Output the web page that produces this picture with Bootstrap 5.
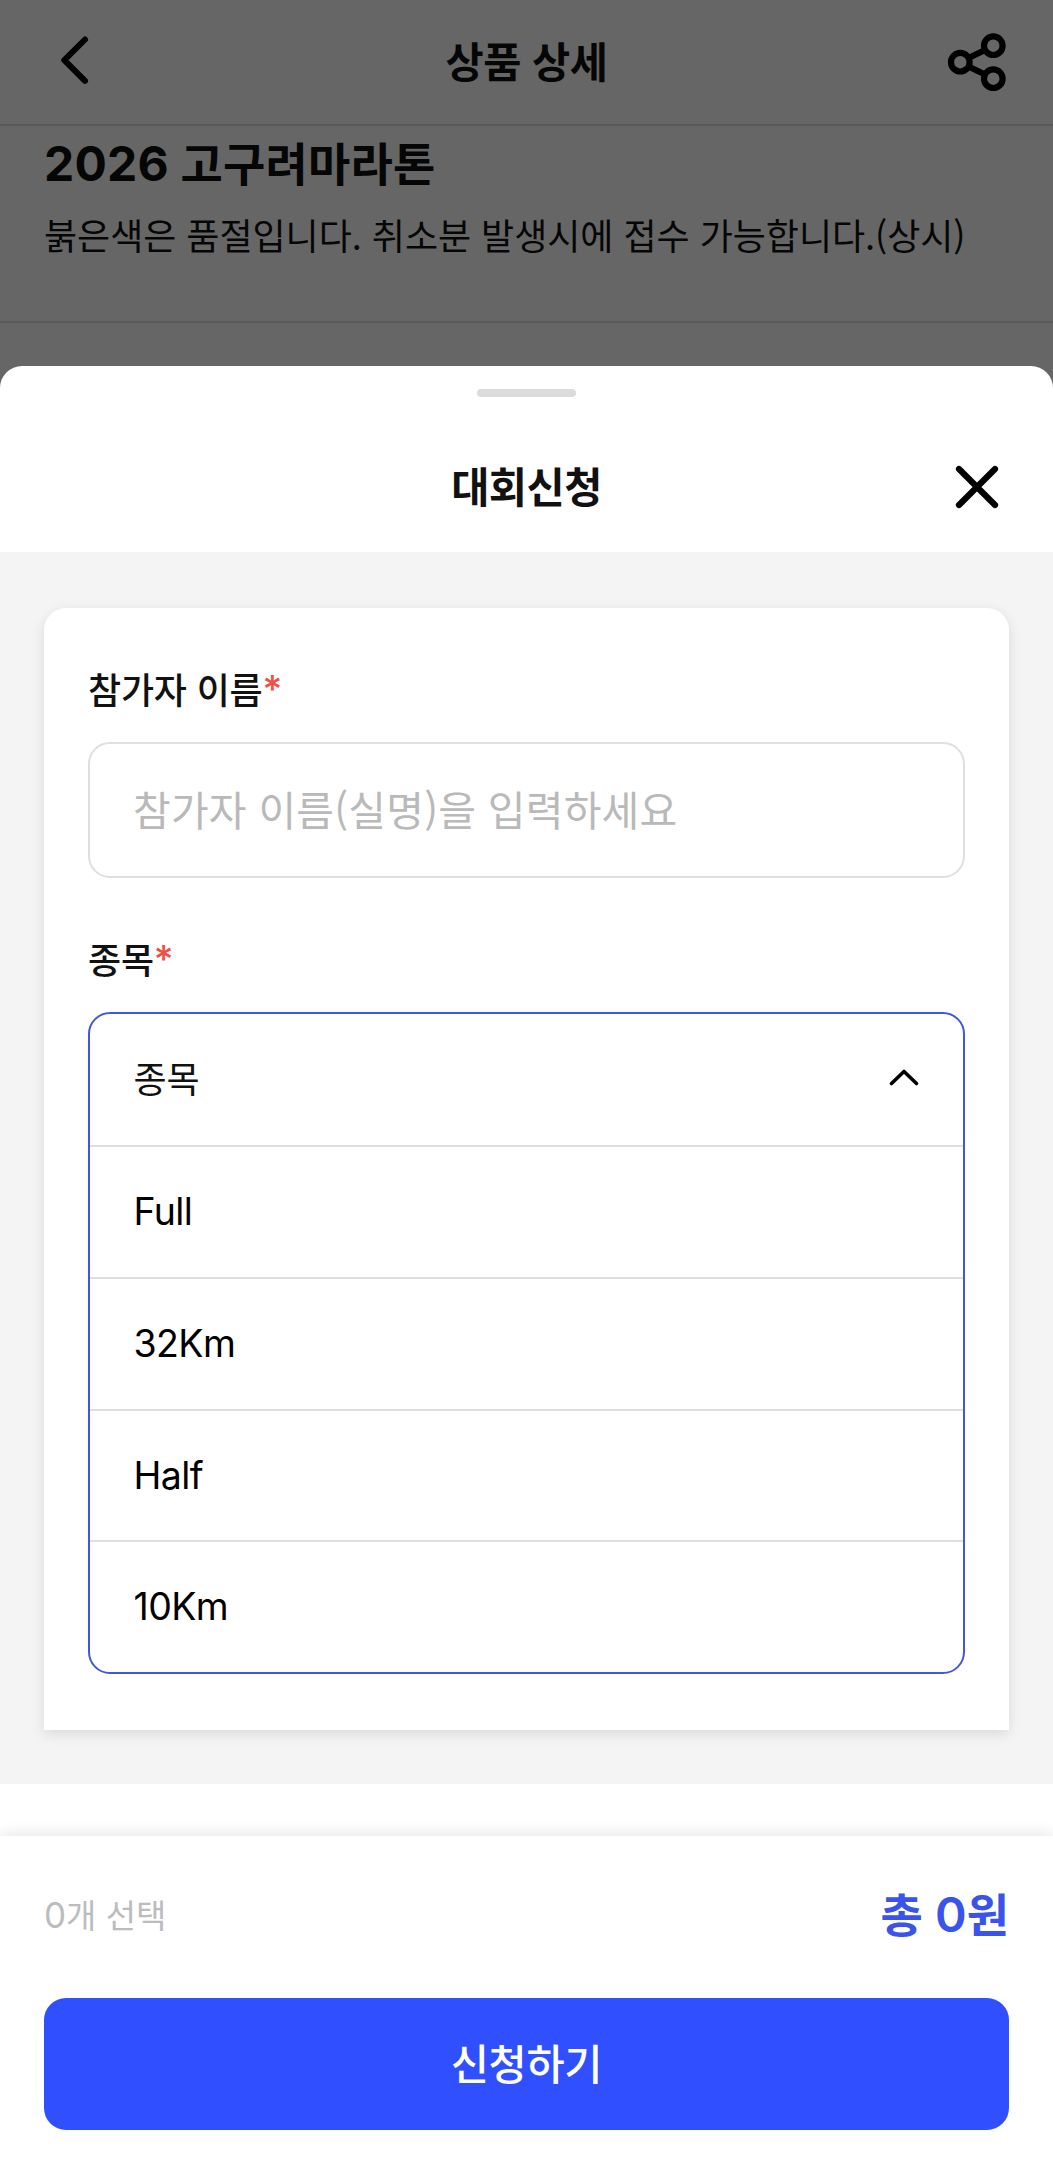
<!DOCTYPE html>
<html lang="ko">
<head>
<meta charset="utf-8">
<meta name="viewport" content="width=device-width, initial-scale=1">
<title>대회신청</title>
<link href="https://cdn.jsdelivr.net/npm/bootstrap@5.3.0/dist/css/bootstrap.min.css" rel="stylesheet">
<style>
  body { font-family: Inter, "Noto Sans CJK KR", sans-serif; color: #111; background: #fff; width: 1053px; height: 2160px; overflow: hidden; line-height: 1; }
  svg { display: block; fill: none; stroke: #000; stroke-linecap: round; stroke-linejoin: round; overflow: visible; }
  .ko { font-family: "Noto Sans CJK KR", sans-serif; }
  .page-area { height: 366px; }
  .top-bar { height: 126px; border-bottom: 2px solid #e1e1e1; padding: 0 44px; }
  .side-slot { width: 60px; }
  .bar-title { font-size: 41.5px; font-weight: 700; letter-spacing: -.5px; padding-bottom: 3px; }
  .product-info { height: 197px; border-bottom: 2px solid #e1e1e1; padding: 7px 44px 0; }
  .product-name { font-size: 48px; font-weight: 700; line-height: 56px; letter-spacing: .2px; }
  .product-name .ko { font-size: 46px; }
  .product-desc { font-size: 36px; line-height: 54px; letter-spacing: -.04px; margin-top: 14.500px; }
  .dim { background: rgba(0,0,0,.6); height: 410px; z-index: 1; }
  .sheet { z-index: 2; height: 1794px; border-radius: 22px 22px 0 0; background: #fff; }
  .grip { width: 99px; height: 8px; border-radius: 4px; background: #dcdcdc; margin-top: 23px; }
  .sheet-head { height: 155px; padding: 25px 44px 0; }
  .sheet-body { background: #f4f4f4; height: 1232px; padding: 56px 44px 0; }
  .form-card { height: 1122px; background: #fff; border-radius: 22px 22px 0 0; box-shadow: 0 4px 14px rgba(0,0,0,.11); padding: 53px 44px 0; }
  .field-label { font-size: 36px; font-weight: 500; line-height: 54px; height: 54px; letter-spacing: -.2px; margin-bottom: 27px; }
  .event-label { margin-top: 53px; }
  .req { color: #f04f44; font-family: Inter, sans-serif; font-size: 38px; line-height: 1; vertical-align: 1px; }
  .name-input { height: 136px; border: 2px solid #dfdfdf; border-radius: 22px; padding: 0 43px 5px; font-size: 41px; letter-spacing: .2px; }
  .name-input::placeholder { color: #b9b9b9; opacity: 1; }
  .event-list { height: 662px; border: 2px solid #4258d6; border-radius: 22px; margin-bottom: 0; }
  .event-list .list-group-item { flex: 1 1 0; padding: 0 43.500px; border: 0; border-bottom: 2px solid #dfdfdf; font-size: 37.5px; color: #000; background: transparent; letter-spacing: -.6px; }
  .event-list .list-group-item:first-child { flex: 0 0 133px; }
  .event-list .list-group-item:last-child { border-bottom: 0; }
  .event-list .ko { font-size: 36px; color: #111; letter-spacing: -.2px; padding-bottom: 5px; }
  .event-list svg { margin-bottom: 3px; }
  .pay-bar { height: 324px; margin-top: 52px; background: #fff; padding: 0 44px; box-shadow: 0 -2px 14px rgba(0,0,0,.1); }
  .sum-row { height: 162px; }
  .count-text { color: #bcbcbc; font-size: 35px; padding-bottom: 3px; }
  .count-text .ko { font-size: 33px; letter-spacing: 0; }
  .total-text { color: #3a53ea; font-size: 48px; font-weight: 600; padding-bottom: 6px; }
  .total-text .ko { font-size: 46px; font-weight: 700; }
  .apply-btn { height: 132px; border: 0; border-radius: 22px; background: #3050ff; font-size: 41.5px; font-weight: 500; letter-spacing: -.3px; padding: 0 0 4px; }
</style>
<script src="https://cdn.jsdelivr.net/npm/bootstrap@5.3.0/dist/js/bootstrap.bundle.min.js"></script>
</head>
<body class="position-relative">
  <div class="page-area">
    <header class="top-bar d-flex align-items-center justify-content-between">
      <div class="side-slot"><svg width="60" height="60" viewBox="44 32 60 60" stroke-width="6"><path d="M85 39.500L64.300 60.200l20.700 20.700"/></svg></div>
      <div class="bar-title ko">상품 상세</div>
      <div class="side-slot d-flex justify-content-end"><svg width="60" height="60" viewBox="949 32 60 60" stroke-width="6.200"><circle cx="960.300" cy="62.200" r="9.300"/><circle cx="993.300" cy="45.700" r="9.300"/><circle cx="993.300" cy="78.700" r="9.300"/><path d="M969 57.700l15.500-7.500M969 66.700l15.500 7.500"/></svg></div>
    </header>
    <section class="product-info">
      <h1 class="product-name mb-0">2026 <span class="ko">고구려마라톤</span></h1>
      <p class="product-desc ko mb-0 text-nowrap">붉은색은 품절입니다. 취소분 발생시에 접수 가능합니다.(상시)</p>
    </section>
  </div>
  <div class="dim position-absolute top-0 start-0 w-100"></div>

  <main class="sheet position-relative d-flex flex-column">
    <div class="grip align-self-center flex-shrink-0"></div>
    <div class="sheet-head d-flex align-items-center justify-content-between flex-shrink-0">
      <div class="side-slot"></div>
      <div class="bar-title ko">대회신청</div>
      <div class="side-slot d-flex justify-content-end"><svg width="60" height="60" viewBox="949 456 60 60" stroke-width="6.200"><path d="M959 468l36 36M995 468l-36 36"/></svg></div>
    </div>
    <div class="sheet-body flex-shrink-0">
      <form class="form-card">
        <label class="field-label ko d-block" for="runner">참가자 이름<span class="req">*</span></label>
        <input id="runner" class="name-input form-control ko" placeholder="참가자 이름(실명)을 입력하세요">
        <div class="field-label event-label ko">종목<span class="req">*</span></div>
        <ul class="event-list list-group">
          <li class="list-group-item d-flex align-items-center justify-content-between"><span class="ko">종목</span><svg width="34" height="34" viewBox="885 1061 34 34" stroke-width="3.600"><path d="M890.500 1083.500l12.500-12 12.500 12"/></svg></li>
          <li class="list-group-item d-flex align-items-center">Full</li>
          <li class="list-group-item d-flex align-items-center">32Km</li>
          <li class="list-group-item d-flex align-items-center">Half</li>
          <li class="list-group-item d-flex align-items-center">10Km</li>
        </ul>
      </form>
    </div>
    <div class="pay-bar flex-shrink-0">
      <div class="sum-row d-flex align-items-center justify-content-between">
        <div class="count-text">0<span class="ko">개 선택</span></div>
        <div class="total-text"><span class="ko">총</span> 0<span class="ko">원</span></div>
      </div>
      <button class="apply-btn btn btn-primary w-100 ko" type="button">신청하기</button>
    </div>
  </main>
</body>
</html>
